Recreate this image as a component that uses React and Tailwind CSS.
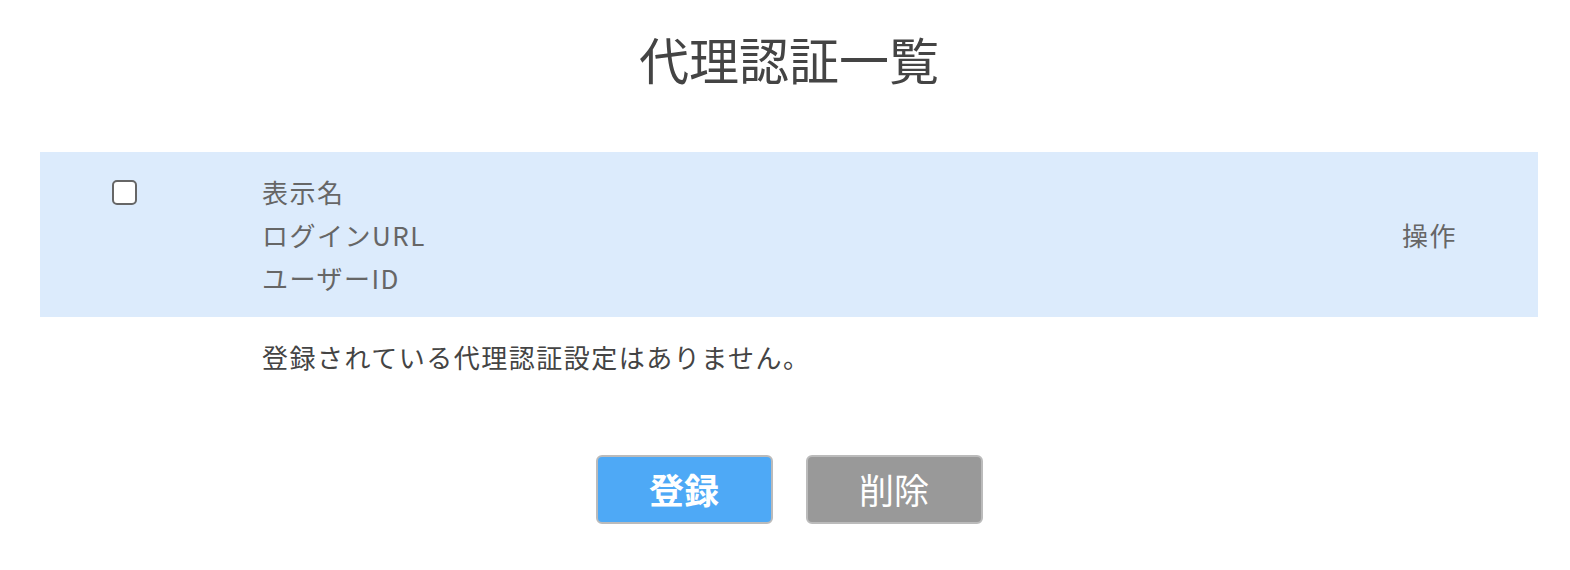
export default function App() {
  const font = { fontFamily: '"Noto Sans CJK JP", "Noto Sans", sans-serif' };
  return (
    <div className="w-[1570px] h-[570px] bg-white" style={font}>
      <h1 className="text-center text-[50px] leading-none text-[#444] pt-[33px] pl-[8px]">代理認証一覧</h1>
      <div className="ml-[40px] mt-[69px] w-[1498px]">
        <div className="flex h-[165px] bg-[#dcebfc] text-[#666] text-[26px] tracking-[1.5px]">
          <div className="w-[222px] pt-[28px] pl-[72px]">
            <div className="w-[25px] h-[25px] rounded-[5px] border-2 border-[#666] bg-white"></div>
          </div>
          <div className="flex-1 flex flex-col justify-center leading-[43px]">
            <div>表示名</div>
            <div>ログインURL</div>
            <div>ユーザーID</div>
          </div>
          <div className="w-[136px] flex items-center">操作</div>
        </div>
        <div className="pl-[222px] pt-[18px] text-[26px] tracking-[1.5px] text-[#444] leading-[43px]">登録されている代理認証設定はありません。</div>
      </div>
      <div className="flex justify-center gap-[33px] mt-[77px] pl-[8px]">
        <button className="w-[177px] h-[69px] rounded-[6px] border-2 border-[#bbb] bg-[#4ea9f6] text-white text-[35px] font-bold">登録</button>
        <button className="w-[177px] h-[69px] rounded-[6px] border-2 border-[#bbb] bg-[#999] text-white text-[35px]">削除</button>
      </div>
    </div>
  );
}
